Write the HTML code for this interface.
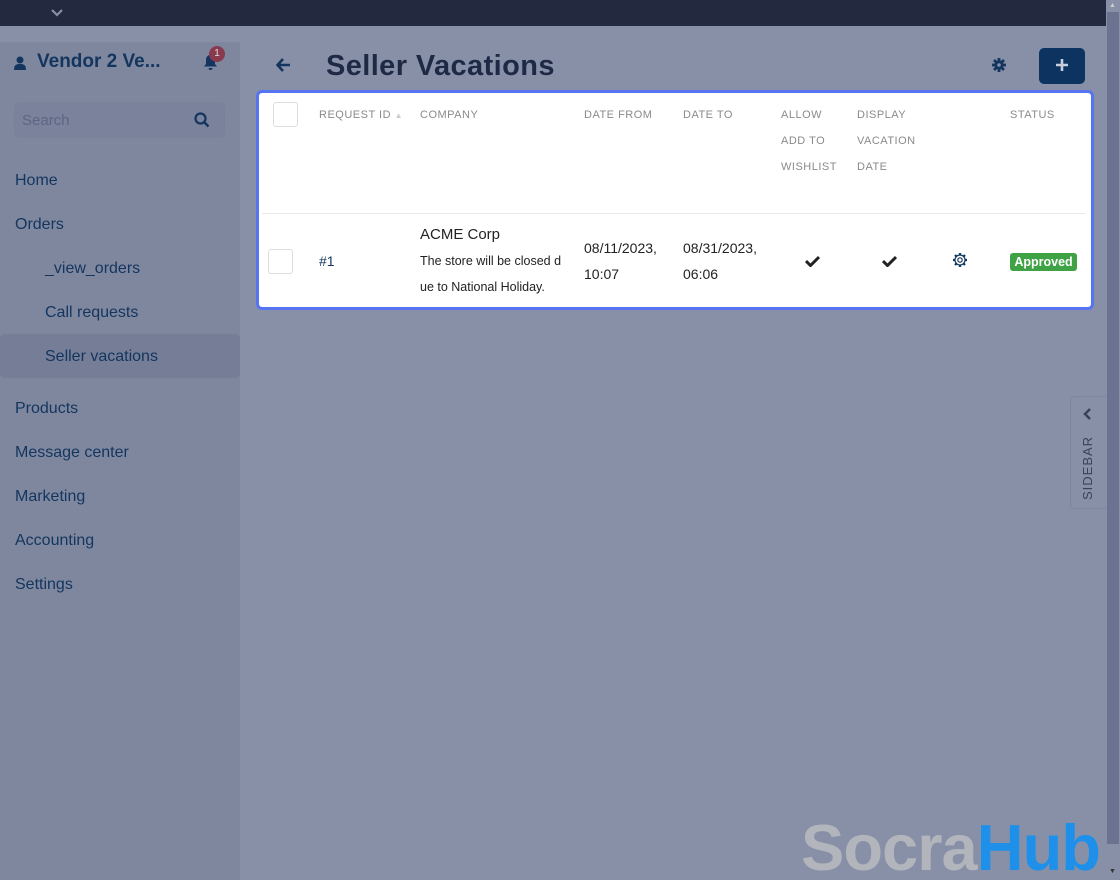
<!DOCTYPE html>
<html><head><meta charset="utf-8"><style>
*{margin:0;padding:0;box-sizing:border-box}
html,body{width:1120px;height:880px;overflow:hidden}
body{background:#8890a8;font-family:"Liberation Sans","DejaVu Sans",sans-serif;position:relative;color:#1a2a45}
.top{position:absolute;left:0;top:0;width:1106px;height:26px;background:#23293f}
.side{position:absolute;left:0;top:42px;width:240px;height:838px;background:#7f879f}
.abs{position:absolute}
.nav{position:absolute;left:15px;font-size:16px;color:#13355e}
.card{position:absolute;left:256px;top:90px;width:838px;height:220px;background:#fff;border:3px solid #5673f2;border-radius:6px}
.th{position:absolute;top:9px;font-size:11px;color:#8a8a8a;letter-spacing:.5px;line-height:26px}
.cb{position:absolute;width:25px;height:25px;border:1px solid #ddd;border-radius:3px;background:#fff}
.td{position:absolute;font-size:14px;color:#222;line-height:26px}
.scroll{position:absolute;left:1106px;top:0;width:14px;height:880px;background:#8890a8}
</style></head><body>
<div class="top"><svg class="abs" style="left:51px;top:9px" width="12" height="8" viewBox="0 0 12 8"><path d="M1 1l5 5 5-5" stroke="#8890a8" stroke-width="2.2" fill="none"/></svg></div>
<div class="side">
  <svg class="abs" style="left:14px;top:14px" width="12" height="14" viewBox="0 0 12 14"><circle cx="6" cy="4" r="3.5" fill="#13355e"/><path d="M0 14c0-5 2-6 6-6s6 1 6 6z" fill="#13355e"/></svg>
  <div class="abs" style="left:37px;top:9px;font-size:19px;font-weight:bold;color:#13355e">Vendor 2 Ve...</div>
  <svg class="abs" style="left:203px;top:12px" width="15" height="16" viewBox="0 0 15 16"><path d="M7.5 1c3 0 4.5 2 4.5 5v4l2 2.5H1l2-2.5V6c0-3 1.5-5 4.5-5zM5.5 14h4a2 2 0 01-4 0z" fill="#13355e"/></svg>
  <div class="abs" style="left:209px;top:4px;width:16px;height:16px;border-radius:8px;background:#8a3a4e;color:#ddd;font-size:10px;text-align:center;line-height:16px">1</div>
  <div class="abs" style="left:14px;top:60px;width:211px;height:36px;border-radius:5px;background:#7a829c;border:1px solid #78809a"></div>
  <div class="abs" style="left:22px;top:70px;font-size:15px;color:#5c6683">Search</div>
  <svg class="abs" style="left:194px;top:70px" width="16" height="16" viewBox="0 0 16 16"><circle cx="6.5" cy="6.5" r="5" stroke="#13355e" stroke-width="2.2" fill="none"/><path d="M10 10l4.5 4.5" stroke="#13355e" stroke-width="2.5"/></svg>
  <div class="abs" style="left:0;top:292px;width:240px;height:44px;border-radius:5px;background:#757d97"></div>
</div>
<div class="nav" style="top:172px">Home</div>
<div class="nav" style="top:216px">Orders</div>
<div class="nav" style="top:260px;left:45px">_view_orders</div>
<div class="nav" style="top:304px;left:45px">Call requests</div>
<div class="nav" style="top:348px;left:45px">Seller vacations</div>
<div class="nav" style="top:400px">Products</div>
<div class="nav" style="top:444px">Message center</div>
<div class="nav" style="top:488px">Marketing</div>
<div class="nav" style="top:532px">Accounting</div>
<div class="nav" style="top:576px">Settings</div>

<svg class="abs" style="left:276px;top:58px" width="15" height="14" viewBox="0 0 15 14"><path d="M7 1L1.5 7 7 13M2 7h12" stroke="#13355e" stroke-width="2.6" fill="none"/></svg>
<div class="abs" style="left:326px;top:50px;font-size:29px;font-weight:bold;color:#1e2a45;letter-spacing:.4px">Seller Vacations</div>
<svg class="abs" style="left:992px;top:58px" width="14" height="14" viewBox="0 0 14 14"><g fill="#13355e"><circle cx="7" cy="7" r="4.6"/><rect x="5.6" y="0" width="2.8" height="14"/><rect x="0" y="5.6" width="14" height="2.8"/><rect x="5.6" y="0" width="2.8" height="14" transform="rotate(45 7 7)"/><rect x="5.6" y="0" width="2.8" height="14" transform="rotate(-45 7 7)"/></g><circle cx="7" cy="7" r="1.8" fill="#8890a8"/></svg>
<div class="abs" style="left:1039px;top:48px;width:46px;height:36px;border-radius:5px;background:#0d3361"></div>
<svg class="abs" style="left:1056px;top:59px" width="12" height="12" viewBox="0 0 12 12"><path d="M6 0v12M0 6h12" stroke="#c8cedd" stroke-width="2.6"/></svg>

<div class="card">
  <div class="cb" style="left:14px;top:9px"></div>
  <div class="th" style="left:60px">REQUEST ID <span style="color:#ccc;font-size:8px">▲</span></div>
  <div class="th" style="left:161px">COMPANY</div>
  <div class="th" style="left:325px">DATE FROM</div>
  <div class="th" style="left:424px">DATE TO</div>
  <div class="th" style="left:522px">ALLOW<br>ADD TO<br>WISHLIST</div>
  <div class="th" style="left:598px">DISPLAY<br>VACATION<br>DATE</div>
  <div class="th" style="left:751px">STATUS</div>
  <div class="abs" style="left:3px;top:120px;width:823px;height:1px;background:#e8e8e8"></div>
  <div class="cb" style="left:9px;top:156px"></div>
  <div class="td" style="left:60px;top:155px;color:#13355e">#1</div>
  <div class="td" style="left:161px;top:129px;font-size:15px">ACME Corp</div>
  <div class="td" style="left:161px;top:155px;font-size:12.5px;width:150px;white-space:nowrap">The store will be closed d<br>ue to National Holiday.</div>
  <div class="td" style="left:325px;top:142px">08/11/2023,<br>10:07</div>
  <div class="td" style="left:424px;top:142px">08/31/2023,<br>06:06</div>
  <svg class="abs" style="left:546px;top:162px" width="15" height="12" viewBox="0 0 15 12"><path d="M1 6l4.5 4.5L14 2" stroke="#222" stroke-width="3" fill="none"/></svg>
  <svg class="abs" style="left:623px;top:162px" width="15" height="12" viewBox="0 0 15 12"><path d="M1 6l4.5 4.5L14 2" stroke="#222" stroke-width="3" fill="none"/></svg>
  <svg class="abs" style="left:693px;top:159px" width="16" height="16" viewBox="0 0 16 16"><g stroke="#13355e" stroke-width="1.2" fill="none"><circle cx="8" cy="8" r="2.2"/><circle cx="8" cy="8" r="5"/></g><g stroke="#13355e" stroke-width="2.2"><path d="M8 1v2.5M8 12.5V15M1 8h2.5M12.5 8H15M3 3l1.8 1.8M11.2 11.2L13 13M3 13l1.8-1.8M11.2 4.8L13 3"/></g></svg>
  <div class="abs" style="left:751px;top:160px;width:67px;height:18px;background:#3fa245;border-radius:3px;color:#fff;font-size:12.5px;font-weight:bold;text-align:center;line-height:18px">Approved</div>
</div>

<div class="abs" style="left:1070px;top:396px;width:36px;height:113px;border:1px solid #7d859e;border-right:none;border-radius:4px 0 0 4px;background:#8890a8"></div>
<svg class="abs" style="left:1082px;top:408px" width="10" height="12" viewBox="0 0 10 12"><path d="M8 1L3 6l5 5" stroke="#3a4258" stroke-width="2.5" fill="none"/></svg>
<div class="abs" style="left:1080px;top:500px;transform:rotate(-90deg);transform-origin:0 0;font-size:13px;color:#3a4258;letter-spacing:1px">SIDEBAR</div>

<div class="abs" style="left:801px;top:808px;font-size:65px;font-weight:bold;line-height:80px;letter-spacing:-1px;white-space:nowrap"><span style="color:#b3b5bc">Socra</span><span style="color:#1e90ea">Hub</span></div>

<div class="scroll"><div class="abs" style="left:1px;top:12px;width:12px;height:832px;background:#6b7390"></div>
<div class="abs" style="left:3px;top:2px;font-size:7px;color:#ccc">▲</div><div class="abs" style="left:3px;top:868px;font-size:7px;color:#333">▼</div></div>
</body></html>
